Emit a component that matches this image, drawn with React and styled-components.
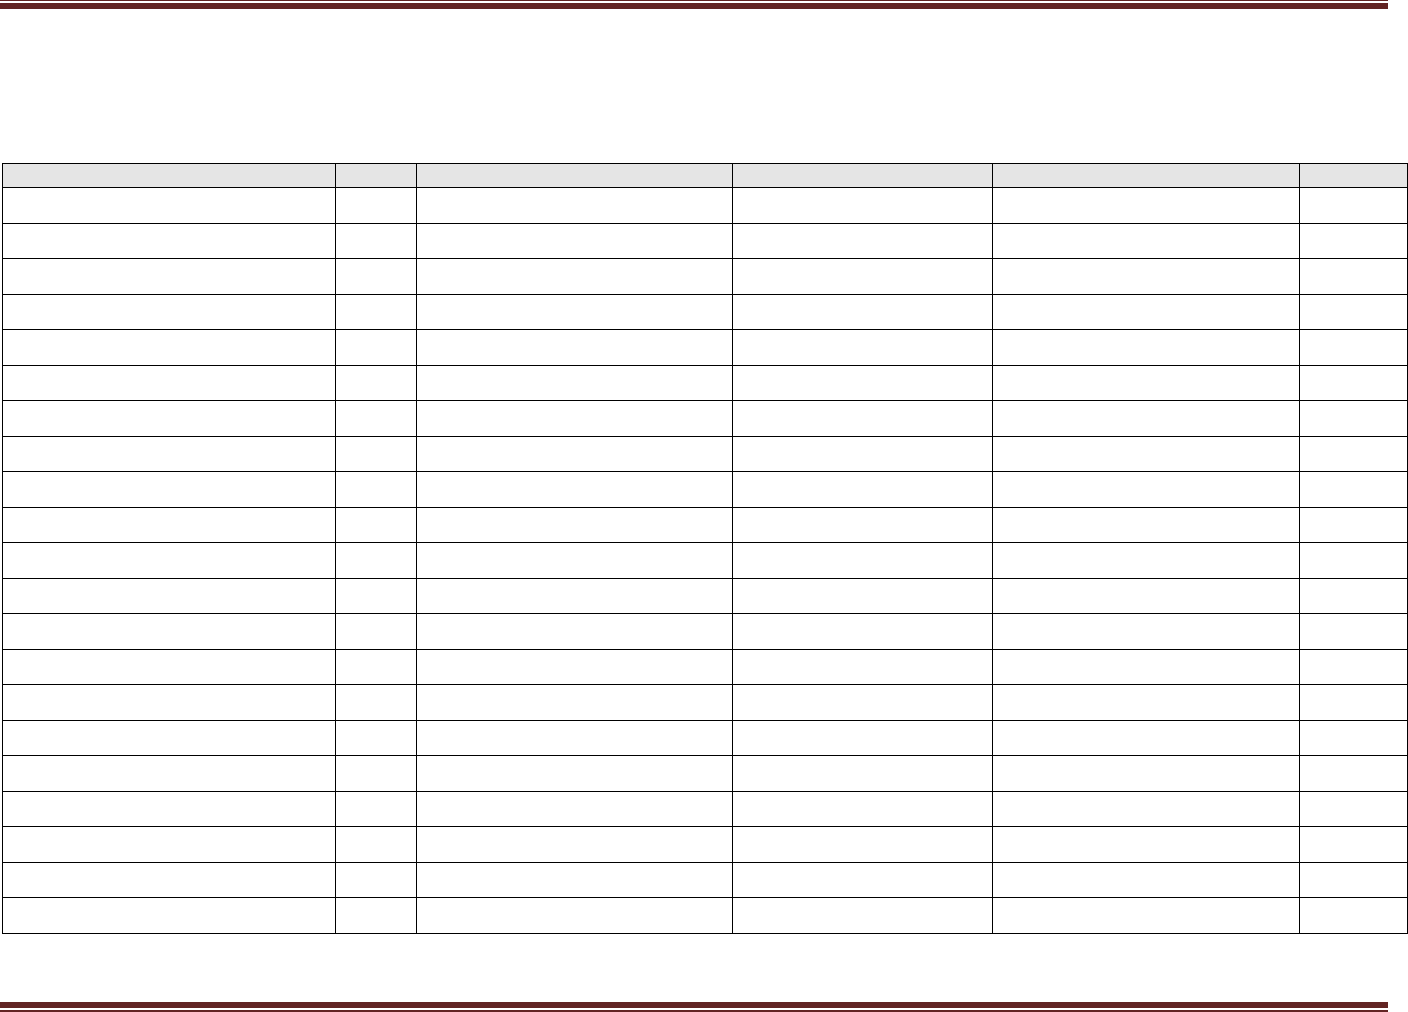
import React from "react";
import styled, { createGlobalStyle } from "styled-components";

const Global = createGlobalStyle`
  html, body { margin: 0; padding: 0; background: #fff; }
  body { font-family: "Liberation Sans", Arial, sans-serif; }
`;

const Page = styled.div`
  width: 1408px;
  height: 1012px;
  display: flex;
  flex-direction: column;
  box-sizing: border-box;
`;

const Rule = styled.div`
  width: 1388px;
  display: flex;
  flex-direction: ${(p) => (p.$flip ? "column-reverse" : "column")};
  gap: 2px;
`;

const Line = styled.div`
  height: ${(p) => p.$h}px;
  background: #622423;
`;

const Grid = styled.div`
  margin: 154px 0 0 2px;
  display: grid;
  grid-template-columns: 333px 81px 316px 260px 307px 108px;
  grid-template-rows: 24px;
  grid-auto-rows: 35.5px;
  border-left: 1px solid #000;
  border-top: 1px solid #000;
  width: max-content;
`;

const Cell = styled.div`
  box-sizing: border-box;
  border-right: 1px solid #000;
  border-bottom: 1px solid #000;
  background: ${(p) => (p.$head ? "#e5e5e5" : "#fff")};
  font-size: 13px;
`;

const Footer = styled.div`
  margin-top: auto;
  margin-bottom: 0;
`;

const COLS = 6;
const ROWS = 21;

export default function App() {
  return (
    <Page>
      <Global />
      <Rule>
        <Line $h={1} />
        <Line $h={6} />
      </Rule>
      <Grid>
        {Array.from({ length: COLS }).map((_, i) => (
          <Cell key={"h" + i} $head />
        ))}
        {Array.from({ length: ROWS * COLS }).map((_, i) => (
          <Cell key={i} />
        ))}
      </Grid>
      <Footer>
        <Rule $flip>
          <Line $h={2} />
          <Line $h={6} />
        </Rule>
      </Footer>
    </Page>
  );
}
